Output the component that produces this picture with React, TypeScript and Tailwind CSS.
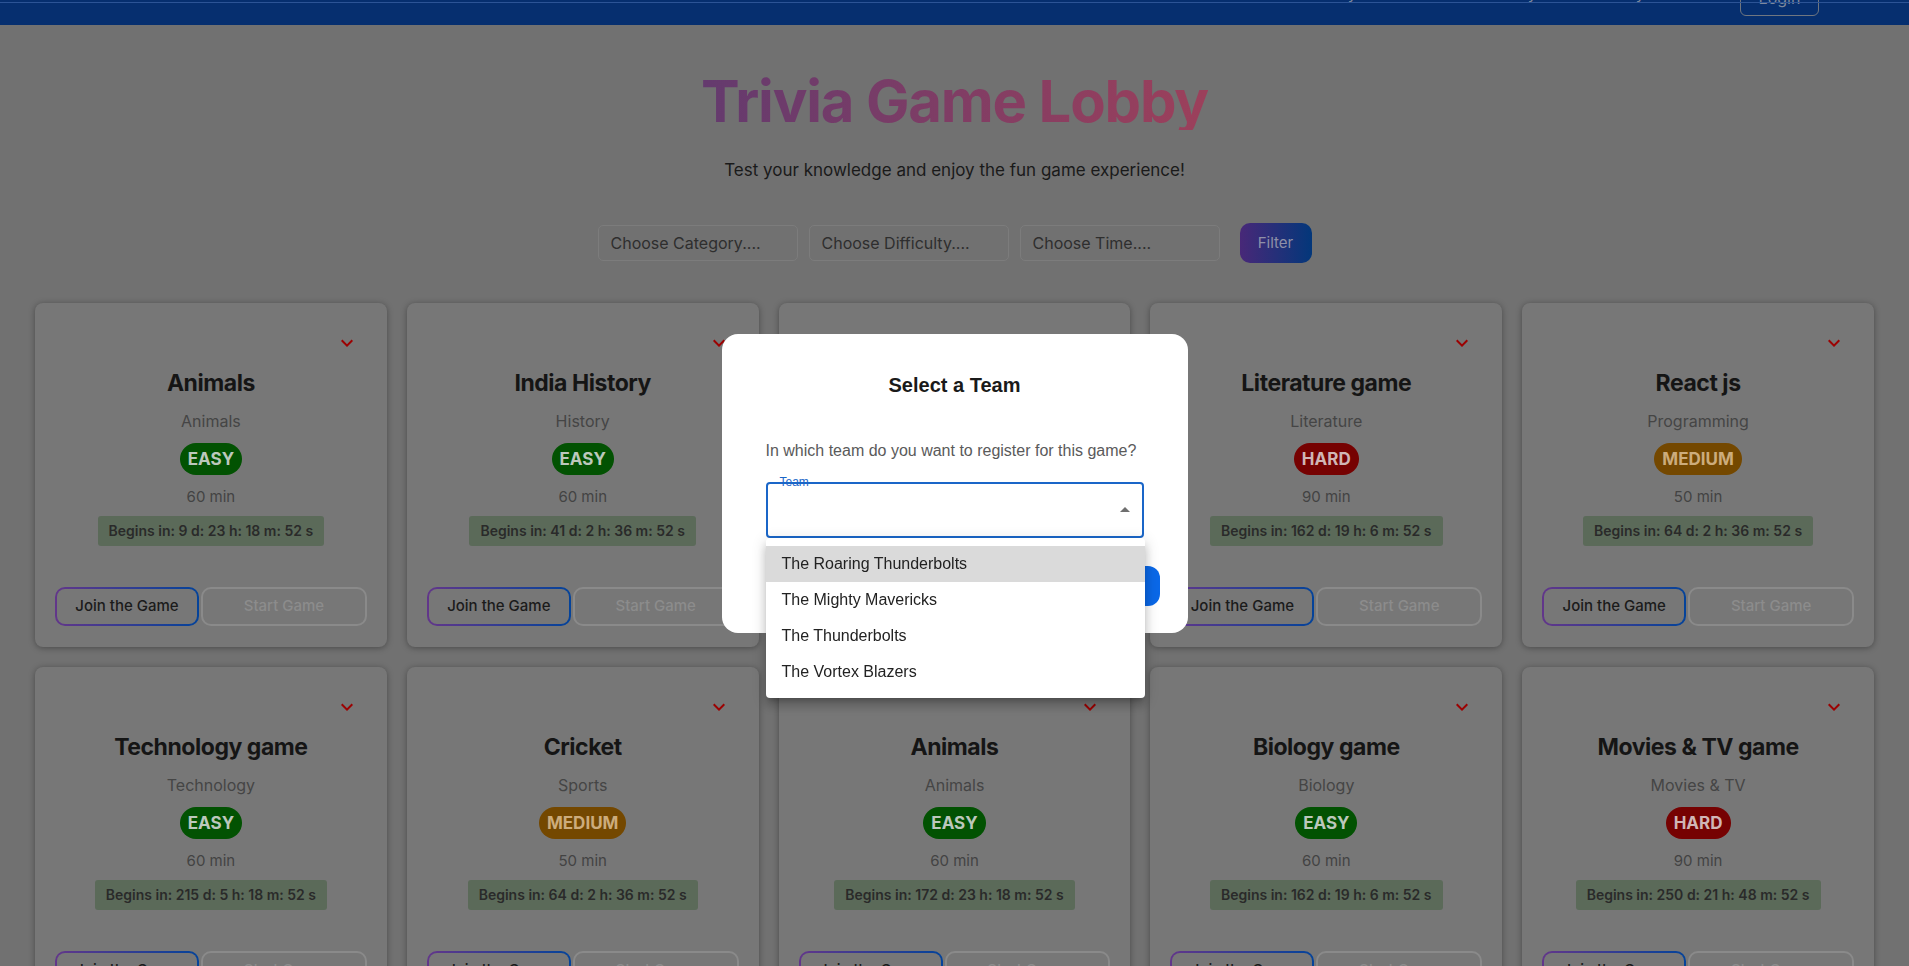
import React from 'react';

type Game = {
  title: string;
  category: string;
  level: 'EASY' | 'MEDIUM' | 'HARD';
  time: number;
  begins: string;
};

const games: Game[] = [
  { title: 'Animals', category: 'Animals', level: 'EASY', time: 60, begins: '9 d: 23 h: 18 m: 52 s' },
  { title: 'India History', category: 'History', level: 'EASY', time: 60, begins: '41 d: 2 h: 36 m: 52 s' },
  { title: 'Science game', category: 'Science', level: 'MEDIUM', time: 50, begins: '98 d: 4 h: 12 m: 52 s' },
  { title: 'Literature game', category: 'Literature', level: 'HARD', time: 90, begins: '162 d: 19 h: 6 m: 52 s' },
  { title: 'React js', category: 'Programming', level: 'MEDIUM', time: 50, begins: '64 d: 2 h: 36 m: 52 s' },
  { title: 'Technology game', category: 'Technology', level: 'EASY', time: 60, begins: '215 d: 5 h: 18 m: 52 s' },
  { title: 'Cricket', category: 'Sports', level: 'MEDIUM', time: 50, begins: '64 d: 2 h: 36 m: 52 s' },
  { title: 'Animals', category: 'Animals', level: 'EASY', time: 60, begins: '172 d: 23 h: 18 m: 52 s' },
  { title: 'Biology game', category: 'Biology', level: 'EASY', time: 60, begins: '162 d: 19 h: 6 m: 52 s' },
  { title: 'Movies & TV game', category: 'Movies & TV', level: 'HARD', time: 90, begins: '250 d: 21 h: 48 m: 52 s' },
];

const levelStyles: Record<Game['level'], string> = {
  EASY: 'bg-[#025202] text-[#bcc8bc]',
  MEDIUM: 'bg-[#744800] text-[#ccac7c]',
  HARD: 'bg-[#760202] text-[#d0b6b6]',
};

const teams = ['The Roaring Thunderbolts', 'The Mighty Mavericks', 'The Thunderbolts', 'The Vortex Blazers'];

const GameCard = ({ game }: { game: Game }) => (
  <div className="flex h-[344px] flex-col items-center rounded-lg bg-[#777777] shadow-[0_1px_6px_rgba(0,0,0,0.35)]">
    <div className="flex w-full justify-end pt-[28px] pr-[28px]">
      <svg viewBox="0 0 24 24" className="h-6 w-6" fill="#9c0202">
        <path d="M16.59 8.59 12 13.17 7.41 8.59 6 10l6 6 6-6z" />
      </svg>
    </div>
    <h3 className="mt-[12px] text-[23px] leading-8 font-bold tracking-[-0.02em] text-[#151515]">{game.title}</h3>
    <p className="mt-[10px] text-base leading-6 text-[#454545]">{game.category}</p>
    <span
      className={`mt-[10px] h-8 rounded-full px-2 text-[17px] leading-8 font-bold ${levelStyles[game.level]}`}
    >
      {game.level}
    </span>
    <p className="mt-[12px] text-[15px] leading-5 text-[#434343]">{game.time} min</p>
    <div className="mt-[9px] h-[30px] rounded-[3px] bg-[#5b6a59] px-[11px] text-[14px] leading-[30px] font-semibold text-[#2a2a2a]">
      Begins in: {game.begins}
    </div>
    <div className="mt-[41px] flex w-full gap-[2px] px-5">
      <div className="h-[39px] w-[144px] rounded-[10px] bg-[linear-gradient(to_right,#62368a,#04439a)] p-[2px]">
        <button className="h-full w-full rounded-[8px] bg-[#777777] text-[15px] font-medium text-[#1b1b1b]">
          Join the Game
        </button>
      </div>
      <button className="h-[39px] flex-1 rounded-[10px] border-2 border-[#8a8a8a] text-[15px] font-medium text-[#8c8c8c]">
        Start Game
      </button>
    </div>
  </div>
);

const App = () => {
  return (
    <div className="relative h-screen overflow-hidden bg-[#717171] font-['Inter',sans-serif]">
      <div className="-mt-[39px]">
        <nav className="relative flex h-16 items-center bg-[#062f6f] px-[47px]">
          <div className="absolute top-[41px] right-0 left-0 h-px bg-[#2c5496]" />
          <span className="text-[20px] leading-7 font-semibold text-[#7d889c]">Trivia Realm</span>
          <div className="ml-auto flex items-center text-base text-[#7d889c]">
            <span className="mr-[30px]">Game Lobby</span>
            <span className="mr-[30px]">Create Team</span>
            <span className="mr-[30px]">My Teams</span>
            <span className="mr-[38px]">My Games</span>
            <button className="mt-[10px] mr-[43px] h-9 w-[79px] rounded-md border border-[#6f7680] text-[#7d889c]">
              Login
            </button>
          </div>
        </nav>

        <main className="flex flex-col items-center">
          <h1 className="mt-[47px] bg-[linear-gradient(to_right,#643a6e,#9c405b)] bg-clip-text text-[58px] leading-none font-bold tracking-[-0.02em] text-transparent">
            Trivia Game Lobby
          </h1>
          <p className="mt-[28px] text-[17px] leading-[25px] text-[#1a1a1a]">
            Test your knowledge and enjoy the fun game experience!
          </p>

          <div className="mt-[40px] flex items-center">
            <input
              placeholder="Choose Category...."
              className="h-9 w-[200px] rounded-[5px] border border-[#7c7c7c] bg-[#717171] px-3 text-base placeholder:text-[#2e2e2e]"
            />
            <input
              placeholder="Choose Difficulty...."
              className="ml-[11px] h-9 w-[200px] rounded-[5px] border border-[#7c7c7c] bg-[#717171] px-3 text-base placeholder:text-[#2e2e2e]"
            />
            <input
              placeholder="Choose Time...."
              className="ml-[11px] h-9 w-[200px] rounded-[5px] border border-[#7c7c7c] bg-[#717171] px-3 text-base placeholder:text-[#2e2e2e]"
            />
            <button className="ml-[20px] h-10 w-[72px] rounded-[10px] bg-[linear-gradient(to_right,#482878,#03377a)] text-[15px] text-[#8e90a8]">
              Filter
            </button>
          </div>

          <div className="mt-[40px] grid w-full grid-cols-5 gap-5 px-[35px]">
            {games.map((g, i) => (
              <GameCard key={i} game={g} />
            ))}
          </div>
        </main>
      </div>

      {/* modal */}
      <div className="fixed inset-0 flex items-center justify-center font-['Liberation_Sans',Arial,sans-serif]">
        <div className="w-[466px] rounded-2xl bg-white px-[28px] pt-[40px] pb-[27px]">
          <h2 className="text-center text-[20px] leading-[23px] font-bold text-[#1a1a1a]">Select a Team</h2>
          <div className="px-4">
            <p className="mt-[42px] text-base leading-6 whitespace-nowrap text-[#5a5a5a]">
              In which team do you want to register for this game?
            </p>
            <div className="relative mt-[19px] h-14 rounded border-2 border-[#1a66c8]">
              <span className="absolute -top-[10px] left-3 text-[12px] leading-[17px] text-[#1a66c8]">Team</span>
              <svg viewBox="0 0 24 24" className="absolute top-[14px] right-[5px] h-6 w-6" fill="#6f6f6f">
                <path d="M7 14l5-5 5 5z" />
              </svg>
              <ul className="absolute top-[54px] -right-[3px] -left-[2px] z-10 rounded bg-white py-2 shadow-[0_5px_5px_-3px_rgba(0,0,0,0.2),0_8px_10px_1px_rgba(0,0,0,0.14),0_3px_14px_2px_rgba(0,0,0,0.12)]">
                {teams.map((t, i) => (
                  <li
                    key={t}
                    className={`h-9 px-4 text-base leading-9 text-[#222222] ${i === 0 ? 'bg-[#dadada]' : ''}`}
                  >
                    {t}
                  </li>
                ))}
              </ul>
            </div>
          </div>
          <div className="mt-[28px] flex justify-end gap-3">
            <button className="h-10 rounded-xl px-5 text-base text-[#0b69e8]">Cancel</button>
            <button className="h-10 w-[116px] rounded-xl bg-[#0a68e8] text-base font-semibold text-white">Register</button>
          </div>
        </div>
      </div>
    </div>
  );
};

export default App;
